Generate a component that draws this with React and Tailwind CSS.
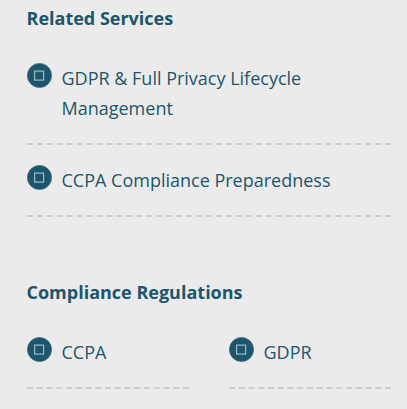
const services = ["GDPR & Full Privacy Lifecycle Management", "CCPA Compliance Preparedness"];
const regulations = ["CCPA", "GDPR"];

function Bullet() {
  return (
    <svg className="h-[25px] w-[25px] shrink-0" viewBox="0 0 25 25" fill="none">
      <circle cx="12.5" cy="12.5" r="12.1" fill="#1c566c" stroke="#3f7183" strokeWidth="0.8" />
      <rect x="7.6" y="8.1" width="9" height="9" stroke="#9db8c3" strokeWidth="1.2" />
    </svg>
  );
}

function Item({ label }) {
  return (
    <li className="flex gap-[9.5px] border-b-2 border-dashed border-[#cccccc] pb-5">
      <Bullet />
      <span className="text-[18px] leading-[30px]">{label}</span>
    </li>
  );
}

export default function App() {
  return (
    <div className="h-[409px] w-[407px] overflow-hidden bg-[#ebebeb] pr-4 pl-[27px] font-['Open_Sans','Noto_Sans',sans-serif] text-[#1c566c]">
      <h3 className="-ml-[0.5px] pt-[3px] text-[18px] leading-[30px] font-bold">Related Services</h3>
      <ul className="mt-[30px] flex flex-col gap-5">
        {services.map((label) => (
          <Item key={label} label={label} />
        ))}
      </ul>

      <h3 className="mt-[60px] -ml-[0.5px] text-[18px] leading-[30px] font-bold">Compliance Regulations</h3>
      <ul className="mt-[30px] grid grid-cols-2 gap-x-10">
        {regulations.map((label) => (
          <Item key={label} label={label} />
        ))}
      </ul>
    </div>
  );
}
